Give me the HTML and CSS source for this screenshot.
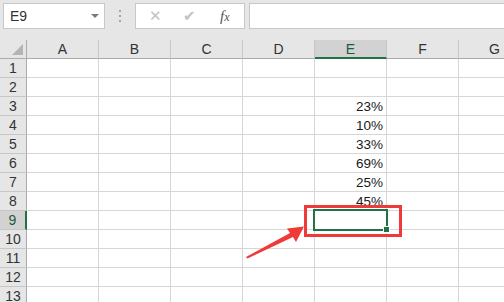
FILE: index.html
```html
<!DOCTYPE html>
<html lang="en">
<head>
    <meta charset="UTF-8">
    <title>Sheet</title>
    <link rel="stylesheet" href="styles.css">
</head>
<body>
    <div class="toolbar">
        <div class="name-box">
            <span>E9</span>
            <span class="drop"></span>
        </div>
        <div class="grip"><i></i><i></i><i></i></div>
        <div class="fx-box">
            <span class="btn cancel">&#x2715;</span>
            <span class="btn ok">&#x2714;</span>
            <span class="fx"><i>f</i><i>x</i></span>
        </div>
        <div class="formula"></div>
    </div>

    <div class="sheet">
        <div class="grid" id="grid"></div>
        <div class="active-cell"><span class="handle"></span></div>
    </div>

    <div class="mark"></div>
    <svg class="arrow" width="504" height="302" viewBox="0 0 504 302">
        <polygon points="246,257 290,233 287,228.5 304,226.5 296,242 293,237 247.5,258.5" fill="#f03a3a"/>
    </svg>

    <script>
        const cols = ["A", "B", "C", "D", "E", "F", "G"];
        const values = { 3: "23%", 4: "10%", 5: "33%", 6: "69%", 7: "25%", 8: "45%" };
        const grid = document.getElementById("grid");

        function cell(cls, text) {
            const el = document.createElement("div");
            el.className = cls;
            if (text) el.textContent = text;
            grid.appendChild(el);
        }

        cell("corner", "");
        cols.forEach(c => cell(c === "E" ? "col-head sel" : "col-head", c));

        for (let r = 1; r <= 13; r++) {
            cell(r === 9 ? "row-head sel" : "row-head", String(r));
            cols.forEach(c => {
                const v = c === "E" ? values[r] : "";
                cell("cell", v);
            });
        }
    </script>
</body>
</html>
```

FILE: styles.css
```css
/* base */
body {
    margin: 0;
    width: 504px;
    height: 302px;
    overflow: hidden;
    background-color: #ffffff;
    font-family: 'Liberation Sans', Arial, sans-serif;
    position: relative;
}

/* formula bar */
.toolbar {
    height: 40px;
    background-color: #e6e6e6;
    display: flex;
    align-items: flex-start;
    padding: 3px 0 0 3px;
    box-sizing: border-box;
}

.name-box {
    width: 102px;
    height: 26px;
    background-color: #fff;
    border: 1px solid #c8c8c8;
    box-sizing: border-box;
    display: flex;
    align-items: center;
    justify-content: space-between;
    padding: 0 5px 0 6px;
    font-size: 14px;
    color: #333;
}

.drop {
    width: 0;
    height: 0;
    border-left: 4px solid transparent;
    border-right: 4px solid transparent;
    border-top: 4px solid #7a7a7a;
}

.grip {
    width: 30px;
    height: 26px;
    display: flex;
    flex-direction: column;
    align-items: center;
    justify-content: center;
    gap: 3px;
}

.grip i {
    width: 2px;
    height: 2px;
    background-color: #a6a6a6;
}

.fx-box {
    width: 110px;
    height: 26px;
    background-color: #fff;
    border: 1px solid #c8c8c8;
    box-sizing: border-box;
    display: flex;
    align-items: center;
    padding-left: 13px;
}

.btn {
    color: #c2c2c2;
    font-size: 15px;
    font-family: 'DejaVu Sans', sans-serif;
}

.cancel {
    width: 34px;
}

.ok {
    width: 37px;
}

.fx {
    font-family: 'Liberation Serif', serif;
    font-size: 15px;
    color: #555;
}

.fx i:last-child {
    font-size: 12px;
}

.formula {
    flex: 1;
    height: 26px;
    margin-left: 4px;
    background-color: #fff;
    border: 1px solid #c8c8c8;
    border-right: none;
    box-sizing: border-box;
}

/* sheet */
.sheet {
    position: relative;
}

.grid {
    display: grid;
    grid-template-columns: 27px repeat(7, 72px);
    grid-auto-rows: 19px;
    font-size: 14px;
}

.grid > div {
    box-sizing: border-box;
    border-right: 1px solid #d6d6d6;
    border-bottom: 1px solid #d6d6d6;
}

.corner {
    background-color: #e6e6e6;
    position: relative;
    border-right-color: #ababab !important;
    border-bottom-color: #ababab !important;
}

.corner::after {
    content: "";
    position: absolute;
    right: 3px;
    bottom: 3px;
    width: 0;
    height: 0;
    border-left: 11px solid transparent;
    border-bottom: 11px solid #b4b4b4;
}

.col-head {
    background-color: #e6e6e6;
    color: #333;
    text-align: center;
    line-height: 18px;
    border-right-color: #c6c6c6 !important;
    border-bottom-color: #ababab !important;
}

.col-head.sel {
    background-color: #d2d2d2;
    color: #1e5a3a;
    border-bottom: 2px solid #217346 !important;
}

.row-head {
    background-color: #e6e6e6;
    color: #333;
    text-align: center;
    line-height: 19px;
    border-right-color: #ababab !important;
    border-bottom-color: #c6c6c6 !important;
}

.row-head.sel {
    background-color: #d2d2d2;
    color: #1e5a3a;
    border-right: 2px solid #217346 !important;
}

.cell {
    text-align: right;
    font-size: 13.5px;
    color: #1a1a1a;
    line-height: 14px;
    padding: 3px 3px 0 0;
}

.active-cell {
    position: absolute;
    left: 313px;
    top: 169px;
    width: 75px;
    height: 22px;
    border: 2px solid #217346;
    box-sizing: border-box;
}

.handle {
    position: absolute;
    right: -4px;
    bottom: -4px;
    width: 5px;
    height: 5px;
    background-color: #217346;
    border: 1px solid #fff;
}

/* annotation */
.mark {
    position: absolute;
    left: 304px;
    top: 205px;
    width: 98px;
    height: 32px;
    border: 3px solid #f03a3a;
    box-sizing: border-box;
}

.arrow {
    position: absolute;
    left: 0;
    top: 0;
}
```
